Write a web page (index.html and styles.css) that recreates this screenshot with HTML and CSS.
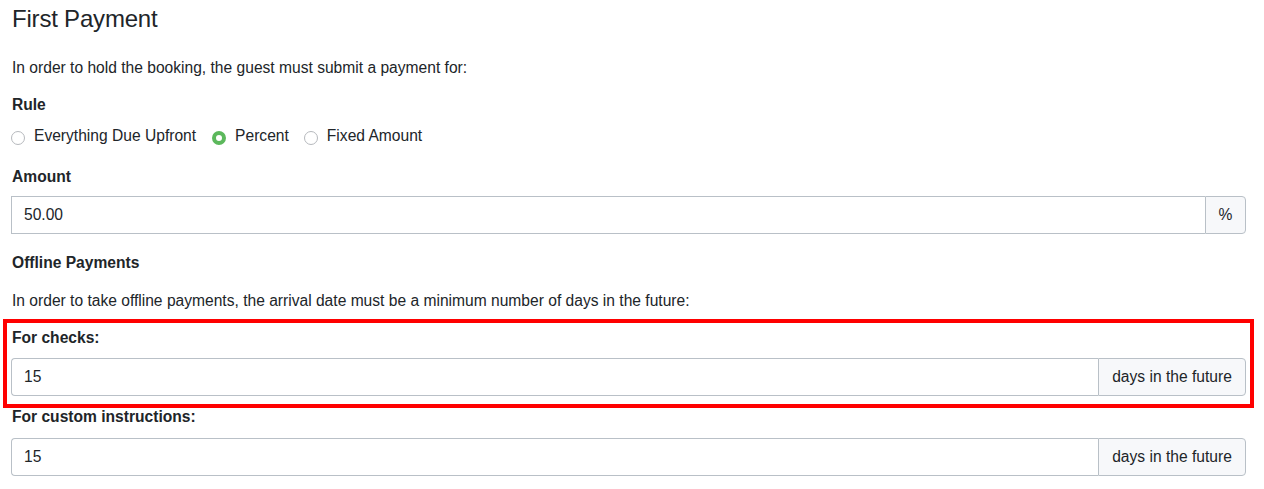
FILE: index.html
```html
<!DOCTYPE html>
<html>
<head>
<meta charset="utf-8">
<link rel="stylesheet" href="styles.css">
</head>
<body>
<div class="page">
  <h2 class="title">First Payment</h2>
  <p class="intro">In order to hold the booking, the guest must submit a payment for:</p>

  <div class="label rule-label">Rule</div>
  <div class="radios">
    <label class="radio"><span class="dot"></span>Everything Due Upfront</label>
    <label class="radio"><span class="dot checked"></span>Percent</label>
    <label class="radio"><span class="dot"></span>Fixed Amount</label>
  </div>

  <div class="label amount-label">Amount</div>
  <div class="input-group square-left">
    <div class="field">50.00</div>
    <div class="addon addon-pct">%</div>
  </div>

  <div class="label offline-label">Offline Payments</div>
  <p class="intro offline-text">In order to take offline payments, the arrival date must be a minimum number of days in the future:</p>

  <div class="group highlighted">
    <div class="label">For checks:</div>
    <div class="input-group">
      <div class="field">15</div>
      <div class="addon addon-days">days in the future</div>
    </div>
  </div>

  <div class="group custom-group">
    <div class="label">For custom instructions:</div>
    <div class="input-group">
      <div class="field">15</div>
      <div class="addon addon-days">days in the future</div>
    </div>
  </div>
</div>
</body>
</html>
```

FILE: styles.css
```css
html, body {
  margin: 0;
  padding: 0;
  background: #ffffff;
}

body {
  font-family: "Liberation Sans", Arial, sans-serif;
  font-size: 15.6px;
  line-height: 20px;
  color: #212529;
}

.page {
  width: 1235px;
  padding: 4px 0 0 11px;
}

.title {
  margin: 0;
  font-size: 24px;
  line-height: 29px;
  font-weight: normal;
  letter-spacing: -0.2px;
  padding-left: 1px;
}

.intro {
  margin: 24px 0 -1px 1px;
  padding-top: 1px;
}

.label {
  font-weight: bold;
  padding-left: 1px;
}

.rule-label,
.amount-label,
.offline-label {
  padding-top: 1px;
  margin-bottom: -1px;
}

.rule-label {
  margin-top: 17px;
}

.radios {
  display: flex;
  align-items: center;
  margin-top: 11px;
  margin-bottom: -1px;
  padding-top: 1px;
  gap: 15px;
}

.radio {
  display: flex;
  align-items: center;
  gap: 9px;
}

.dot {
  width: 14px;
  height: 14px;
  border: 1px solid #b6b9bd;
  border-radius: 50%;
  box-sizing: border-box;
  margin-top: 3px;
  background: #fff;
}

.dot.checked {
  border: 4px solid #5cb85c;
  width: 14px;
  height: 14px;
  margin-left: 1px;
}

.amount-label {
  margin-top: 21px;
}

.input-group {
  display: flex;
  margin-top: 10px;
  height: 38px;
  box-sizing: border-box;
}

.field {
  flex: 1;
  border: 1px solid #b9c0c7;
  border-right: none;
  border-radius: 4px 0 0 4px;
  padding: 0 12px;
  display: flex;
  align-items: center;
  background: #fff;
}

.square-left .field {
  border-radius: 0;
}

.addon {
  border: 1px solid #b9c0c7;
  border-radius: 0 4px 4px 0;
  background: #f7f8fa;
  display: flex;
  align-items: center;
  justify-content: center;
}

.addon-pct {
  width: 39px;
}

.addon-days {
  width: 146px;
}

.offline-label {
  margin-top: 18px;
}

.offline-text {
  margin-top: 18px;
}

.group {
  position: relative;
}

.highlighted {
  margin-top: 18px;
}

.highlighted::after {
  content: "";
  position: absolute;
  top: -9px;
  bottom: -12px;
  left: -8px;
  right: -8px;
  border: 4px solid #ff0000;
  pointer-events: none;
}

.custom-group {
  margin-top: 11px;
}

.custom-group .input-group {
  margin-top: 11px;
}
```
